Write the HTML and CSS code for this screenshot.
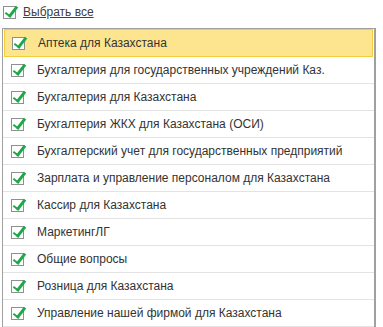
FILE: index.html
```html
<!DOCTYPE html>
<html lang="ru">
<head>
    <meta charset="UTF-8">
    <title>Выбор конфигураций</title>
    <link rel="stylesheet" href="styles.css">
</head>
<body>

    <div class="select-all">
        <span class="check"></span>
        <a href="#" class="link">Выбрать все</a>
    </div>

    <div class="list">
        <div class="row active"><span class="check"></span><span>Аптека для Казахстана</span></div>
        <div class="row"><span class="check"></span><span>Бухгалтерия для государственных учреждений Каз.</span></div>
        <div class="row"><span class="check"></span><span>Бухгалтерия для Казахстана</span></div>
        <div class="row"><span class="check"></span><span>Бухгалтерия ЖКХ для Казахстана (ОСИ)</span></div>
        <div class="row"><span class="check"></span><span>Бухгалтерский учет для государственных предприятий</span></div>
        <div class="row"><span class="check"></span><span>Зарплата и управление персоналом для Казахстана</span></div>
        <div class="row"><span class="check"></span><span>Кассир для Казахстана</span></div>
        <div class="row"><span class="check"></span><span>МаркетингЛГ</span></div>
        <div class="row"><span class="check"></span><span>Общие вопросы</span></div>
        <div class="row"><span class="check"></span><span>Розница для Казахстана</span></div>
        <div class="row"><span class="check"></span><span>Управление нашей фирмой для Казахстана</span></div>
    </div>

</body>
</html>
```

FILE: styles.css
```css
body {
    margin: 0;
    font-family: "Liberation Sans", Arial, sans-serif;
    font-size: 12px;
    color: #333333;
    background: #ffffff;
}

.select-all {
    display: flex;
    align-items: center;
    gap: 7px;
    height: 24px;
    padding-left: 3px;
}

.link {
    color: #404040;
    text-decoration: underline;
}

.check {
    position: relative;
    width: 11px;
    height: 11px;
    border: 1px solid #8f8f8f;
    background: #ffffff;
    flex: none;
}

/* зелёная галочка, выходит за верхний правый угол */
.check::after {
    content: "";
    position: absolute;
    left: 4px;
    top: -3px;
    width: 4px;
    height: 11px;
    border-right: 3px solid #1ea84a;
    border-bottom: 2px solid #1ea84a;
    transform: rotate(38deg);
}

.list {
    margin: 4px 0 0 2px;
    width: 371px;
    border-top: 1px solid #a0a0a0;
    border-left: 1px solid #a0a0a0;
    border-right: 2px solid #a0a0a0;
}

.row {
    display: flex;
    align-items: center;
    gap: 13px;
    height: 26px;
    padding-left: 8px;
    border-bottom: 1px solid #e3e3e3;
}

.row.active {
    background: #fde58f;
    border: 1px solid #f3cd3a;
    padding-left: 7px;
    margin: 0 1px;
}
```
